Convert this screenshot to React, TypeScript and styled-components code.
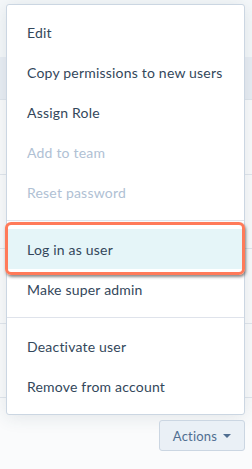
import { styled, createGlobalStyle } from "styled-components";

const GlobalStyle = createGlobalStyle`
  html, body {
    margin: 0;
    padding: 0;
    background: #fafbfc;
  }
  body {
    font-family: Lato, "Open Sans", sans-serif;
    -webkit-font-smoothing: antialiased;
  }
`;

const Page = styled.div`
  position: relative;
  width: 252px;
  height: 469px;
  overflow: hidden;
  display: flex;
  flex-direction: column;
`;

const TopArea = styled.div`
  height: 57px;
  flex-shrink: 0;
  background: #f5f8fa;
`;

const HeaderRow = styled.div`
  height: 43px;
  flex-shrink: 0;
  background: #e9eef4;
  border-bottom: 1px solid #dfe5ec;
  box-sizing: border-box;
`;

const TableRow = styled.div`
  height: 74.5px;
  flex-shrink: 0;
  background: #fafbfc;
  border-bottom: 1px solid #e1e6ed;
  box-sizing: border-box;
`;

const Dropdown = styled.div`
  position: absolute;
  top: 4px;
  left: 6px;
  width: 239px;
  display: flex;
  flex-direction: column;
  align-items: flex-end;
  gap: 5px;
`;

const Menu = styled.div`
  width: 100%;
  box-sizing: border-box;
  background: #fff;
  border: 1px solid #cbd6e2;
  border-radius: 3px;
  box-shadow: 0 2px 18px rgba(45, 62, 80, 0.12);
  display: flex;
  flex-direction: column;
`;

const Group = styled.div<{ $divider?: boolean }>`
  padding: 7px 0 8px;
  display: flex;
  flex-direction: column;

  & + & {
    border-top: 1px solid ${(p) => (p.$divider ? "#dfe3eb" : "transparent")};
    padding-top: 8px;
  }
`;

const Item = styled.div<{ $disabled?: boolean; $active?: boolean }>`
  position: relative;
  height: 40px;
  display: flex;
  align-items: center;
  padding: 0 20px;
  font-size: 14px;
  letter-spacing: 0.2px;
  color: ${(p) => (p.$disabled ? "#b0c1d4" : "#33475b")};
  background: ${(p) => (p.$active ? "#e5f5f8" : "transparent")};
  white-space: nowrap;

  ${(p) =>
    p.$active &&
    `
    &::after {
      content: "";
      position: absolute;
      left: -2px;
      right: -1px;
      top: -7px;
      bottom: -6px;
      border: 3px solid #ff7a59;
      border-radius: 6px;
      box-shadow: 1px 2px 3px rgba(40, 40, 40, 0.55);
      pointer-events: none;
    }
  `}
`;

const ActionsButton = styled.button`
  width: 86px;
  height: 31px;
  box-sizing: border-box;
  display: flex;
  align-items: center;
  justify-content: center;
  gap: 6px;
  padding: 0;
  background: #eaf0f6;
  border: 1px solid #cbd6e2;
  border-radius: 3px;
  color: #506e91;
  font-family: Lato, "Open Sans", sans-serif;
  font-size: 13px;
  letter-spacing: 0.2px;
`;

const Caret = styled.span`
  width: 0;
  height: 0;
  border-left: 4px solid transparent;
  border-right: 4px solid transparent;
  border-top: 4px solid #506e91;
  margin-top: 1px;
`;

type MenuItem = { label: string; disabled?: boolean; active?: boolean };

const groups: { divider: boolean; items: MenuItem[] }[] = [
  {
    divider: false,
    items: [
      { label: "Edit" },
      { label: "Copy permissions to new users" },
      { label: "Assign Role" },
      { label: "Add to team", disabled: true },
      { label: "Reset password", disabled: true },
    ],
  },
  {
    divider: false,
    items: [{ label: "Log in as user", active: true }, { label: "Make super admin" }],
  },
  {
    divider: true,
    items: [{ label: "Deactivate user" }, { label: "Remove from account" }],
  },
];

export default function App() {
  return (
    <Page>
      <GlobalStyle />
      <TopArea />
      <HeaderRow />
      {[0, 1, 2, 3, 4].map((i) => (
        <TableRow key={i} />
      ))}
      <Dropdown>
        <Menu>
          {groups.map((g, gi) => (
            <Group key={gi} $divider={g.divider}>
              {g.items.map((it) => (
                <Item key={it.label} $disabled={it.disabled} $active={it.active}>
                  {it.label}
                </Item>
              ))}
            </Group>
          ))}
        </Menu>
        <ActionsButton>
          Actions <Caret />
        </ActionsButton>
      </Dropdown>
    </Page>
  );
}
